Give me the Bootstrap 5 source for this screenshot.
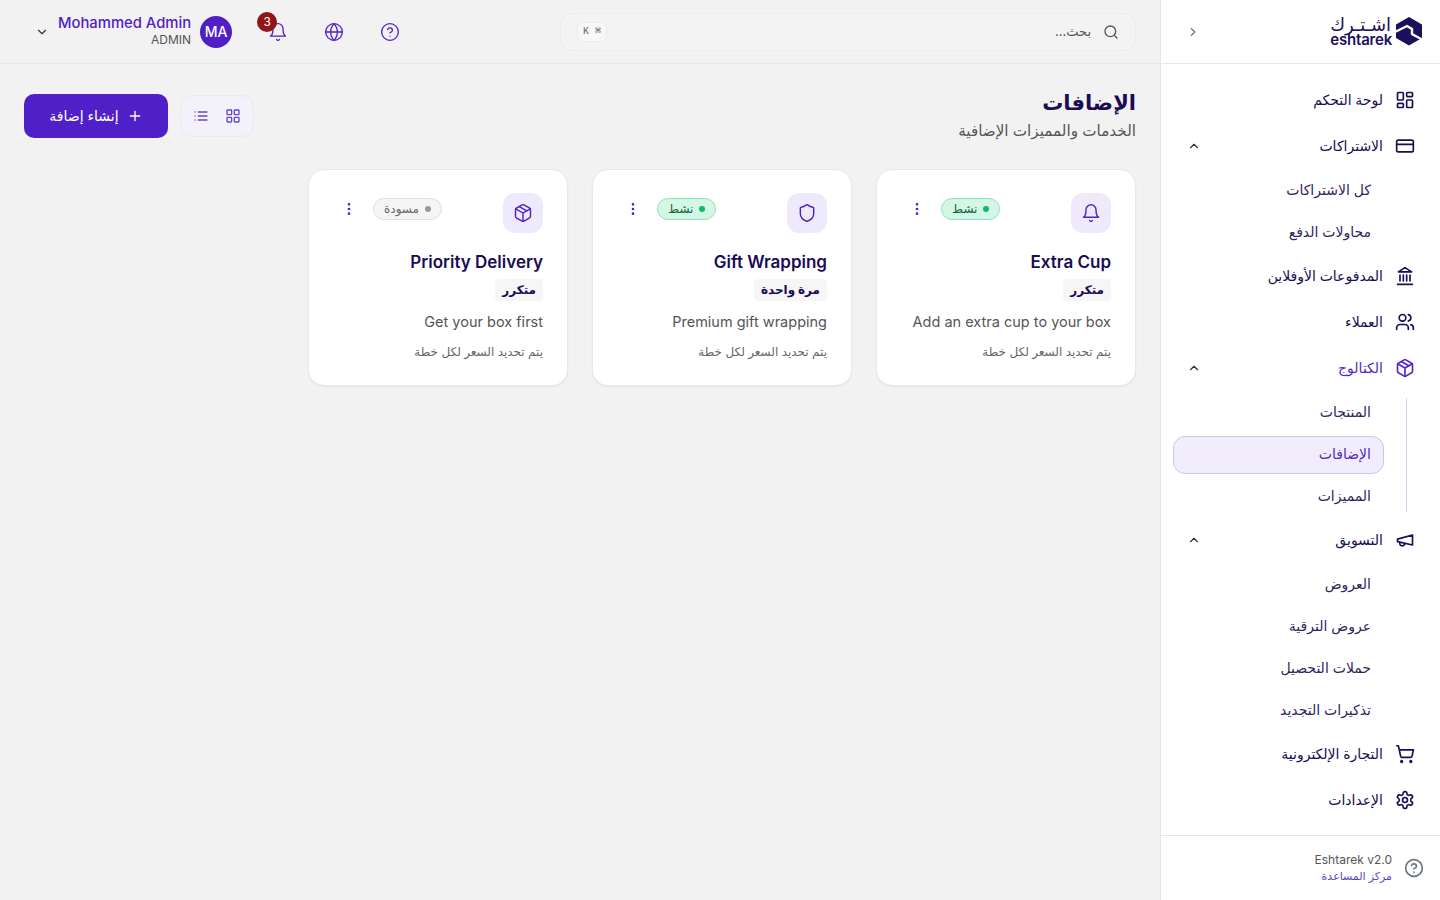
<!DOCTYPE html>
<html lang="ar" dir="rtl">
<head>
    <meta charset="UTF-8">
    <meta name="viewport" content="width=device-width, initial-scale=1.0">
    <title>الإضافات</title>
    <link href="https://cdn.jsdelivr.net/npm/bootstrap@5.3.0/dist/css/bootstrap.min.css" rel="stylesheet">
    <style>
        html, body { height: 100%; }
        body {
            background-color: #f2f2f2;
            font-family: "Inter", "DejaVu Sans", sans-serif;
            color: #1b0c55;
            overflow: hidden;
        }
        svg.ico { fill: none; stroke: currentColor; stroke-width: 2; stroke-linecap: round; stroke-linejoin: round; flex: none; }
        .app-shell { height: 900px; }

        /* sidebar */
        .side-bar { width: 280px; flex: none; background: #fff; border-left: 1px solid #e6e6e6; }
        .side-head { height: 64px; flex: none; border-bottom: 1px solid #e6e6e6; padding: 0 17px 0 25px; }
        .logo-words { text-align: left; color: #1e0f5c; }
        .logo-ar { font-size: 18px; line-height: 17px; }
        .logo-en { font-size: 15px; font-weight: 600; line-height: 14px; letter-spacing: -.2px; }
        .side-nav { padding: 17px 13px 0 12px; }
        .nav-top { height: 38px; margin: 0 12px 8px 0; padding: 0 0 0 14px; font-size: 14px; font-weight: 500; color: #1b0c55; text-decoration: none; gap: 12px; }
        .nav-top .ico { width: 20px; height: 20px; }
        .nav-top span { padding-bottom: 2px; }
        .nav-top .nav-caret { width: 14px; height: 14px; color: #333; margin-right: auto; }
        .nav-top.is-open { margin-bottom: 6px; }
        .nav-top.is-purple { color: #5527c4; }
        .sub-list { position: relative; margin-bottom: 6px; }
        .sub-list.has-line { margin-top: 7px; margin-bottom: 5px; }
        .sub-list.has-line .sub-link { padding-bottom: 4px; }
        .sub-list.has-line::before { content: ""; position: absolute; right: 20px; top: 4px; bottom: 4px; width: 1px; background: #d9d3ee; }
        .sub-wrap { margin-right: 43px; }
        .sub-link { display: flex; align-items: center; height: 38px; margin: 0 0 4px 0; padding: 0 12px 2px; font-size: 14px; color: #31245f; text-decoration: none; border: 1px solid transparent; border-radius: 12px; }
        .sub-link.is-on { background: #f1edfc; border-color: #cfc4ee; color: #5527c4; }
        .side-foot { height: 65px; flex: none; border-top: 1px solid #e6e6e6; margin-top: auto; padding: 0 16px; gap: 12px; }
        .foot-ver { font-size: 12px; color: #555; line-height: 16px; }
        .foot-help { font-size: 11px; color: #5f3fc4; line-height: 16px; }

        /* topbar */
        .top-bar { height: 64px; flex: none; border-bottom: 1px solid #e6e6e6; padding: 0 24px 0 35px; }
        .search-box { width: 576px; height: 38px; flex: none; background: #f3f3f3; border: 1px solid #ebebeb; border-radius: 12px; padding: 0 16px; gap: 12px; color: #555; font-size: 13px; }
        .kbd-hint { font-family: "Liberation Mono", monospace; font-size: 10px; color: #666; background: #f7f7f7; border: 1px solid #ececec; border-radius: 6px; padding: 0 5px; margin-right: auto; height: 20px; line-height: 17px; white-space: nowrap; }
        .top-icons { gap: 36px; margin-right: auto; color: #4f20c8; }
        .top-icons .ico { width: 20px; height: 20px; stroke-width: 1.6; }
        .top-icons .user-caret { width: 14px; height: 14px; stroke-width: 2; color: #333; }
        .bell-wrap { position: relative; display: flex; }
        .bell-count { position: absolute; top: -10px; left: -11px; width: 20px; height: 20px; border-radius: 50%; background: #8f1616; color: #fff; font-size: 12px; display: flex; align-items: center; justify-content: center; }
        .user-box { gap: 9px; }
        .user-avatar { width: 32px; height: 32px; border-radius: 50%; background: #4f20c8; color: #fff; font-size: 14px; font-weight: 500; display: flex; align-items: center; justify-content: center; flex: none; }
        .user-name { font-size: 14.8px; font-weight: 500; color: #4f20c8; line-height: 17px; text-align: right; direction: ltr; }
        .user-role { font-size: 12px; color: #555; line-height: 16px; text-align: right; direction: ltr; }

        /* content */
        .page-main { padding: 25px 24px 24px; }
        .page-title { font-size: 21px; font-weight: 700; color: #1b0c55; line-height: 28px; margin: 0; }
        .page-sub { font-size: 15.2px; color: #555; line-height: 24px; margin: 2px 0 0; }
        .view-toggle { width: 74px; height: 42px; background: #f3f1f9; border: 1px solid #e9e9ee; border-radius: 12px; gap: 16px; color: #6a45cc; }
        .view-toggle .ico { width: 16px; height: 16px; }
        .btn-create { width: 144px; height: 44px; background: #4f20c8; color: #fff; border: 0; border-radius: 10px; font-size: 14px; gap: 8px; }
        .btn-create span { padding-bottom: 2px; }
        .btn-create:hover { background: #4f20c8; color: #fff; }
        .addon-grid { display: grid; grid-template-columns: repeat(4, 1fr); gap: 24px; margin-top: 26px; }
        .addon-card { border: 1px solid #e9e9e9; border-radius: 16px; padding: 23px 24px; height: 217px; box-shadow: 0 1px 2px rgba(0,0,0,.05); }
        .addon-tile { width: 40px; height: 40px; border-radius: 12px; background: #efeafb; color: #4f20c8; display: flex; align-items: center; justify-content: center; }
        .addon-tile .ico { width: 20px; height: 20px; stroke-width: 1.7; }
        .status-pill { height: 22px; border-radius: 11px; border: 1px solid #8fe3bd; background: #d3f6e5; color: #14653f; font-size: 12px; padding: 0 10px 1px; gap: 6px; margin-top: 5px; }
        .status-pill.is-draft { border-color: #e0e0e0; background: #f5f5f5; color: #666; }
        .status-dot { width: 6px; height: 6px; border-radius: 50%; background: #10b76f; }
        .is-draft .status-dot { background: #9a9a9a; }
        .dots-btn { color: #4f20c8; margin: 5px 0 0 8px; height: 22px; }
        .addon-name { font-size: 17px; font-weight: 600; color: #1b0c55; line-height: 24px; margin: 17px 0 0; direction: ltr; text-align: right; }
        .type-tag { display: inline-block; height: 22px; line-height: 21px; background: #f6f6f6; border-radius: 4px; padding: 0 7px; font-size: 12px; font-weight: 700; color: #1b0c55; margin-top: 5px; }
        .addon-desc { font-size: 14.5px; color: #555; line-height: 22px; margin: 10px 0 0; direction: ltr; text-align: right; }
        .addon-note { font-size: 12px; color: #666; line-height: 18px; margin: 10px 0 0; }
    </style>
</head>
<body>
    <svg width="0" height="0" class="position-absolute">
        <symbol id="i-dash" viewBox="0 0 24 24"><rect x="3" y="3" width="7" height="9" rx="1"/><rect x="14" y="3" width="7" height="5" rx="1"/><rect x="14" y="12" width="7" height="9" rx="1"/><rect x="3" y="16" width="7" height="5" rx="1"/></symbol>
        <symbol id="i-card" viewBox="0 0 24 24"><rect x="2" y="5" width="20" height="14" rx="2"/><path d="M2 10h20"/></symbol>
        <symbol id="i-bank" viewBox="0 0 24 24"><path d="M3 22h18M6 18v-7M10 18v-7M14 18v-7M18 18v-7M12 2l8 5H4z"/></symbol>
        <symbol id="i-users" viewBox="0 0 24 24"><path d="M16 21v-2a4 4 0 0 0-4-4H6a4 4 0 0 0-4 4v2"/><circle cx="9" cy="7" r="4"/><path d="M22 21v-2a4 4 0 0 0-3-3.87M16 3.13a4 4 0 0 1 0 7.75"/></symbol>
        <symbol id="i-box" viewBox="0 0 24 24"><path d="M16.5 9.4 7.55 4.24"/><path d="M21 16V8a2 2 0 0 0-1-1.73l-7-4a2 2 0 0 0-2 0l-7 4A2 2 0 0 0 3 8v8a2 2 0 0 0 1 1.73l7 4a2 2 0 0 0 2 0l7-4A2 2 0 0 0 21 16z"/><path d="M3.29 7 12 12l8.71-5M12 22V12"/></symbol>
        <symbol id="i-mega" viewBox="0 0 24 24"><path d="m3 11 18-5v12L3 14v-3z"/><path d="M11.6 16.8a3 3 0 1 1-5.8-1.6"/></symbol>
        <symbol id="i-cart" viewBox="0 0 24 24"><circle cx="8" cy="21" r="1"/><circle cx="19" cy="21" r="1"/><path d="M2.05 2.05h2l2.66 12.42a2 2 0 0 0 2 1.58h9.78a2 2 0 0 0 1.95-1.57l1.65-7.43H5.12"/></symbol>
        <symbol id="i-gear" viewBox="0 0 24 24"><path d="M12.22 2h-.44a2 2 0 0 0-2 2v.18a2 2 0 0 1-1 1.73l-.43.25a2 2 0 0 1-2 0l-.15-.08a2 2 0 0 0-2.73.73l-.22.38a2 2 0 0 0 .73 2.73l.15.1a2 2 0 0 1 1 1.72v.51a2 2 0 0 1-1 1.74l-.15.09a2 2 0 0 0-.73 2.73l.22.38a2 2 0 0 0 2.73.73l.15-.08a2 2 0 0 1 2 0l.43.25a2 2 0 0 1 1 1.73V20a2 2 0 0 0 2 2h.44a2 2 0 0 0 2-2v-.18a2 2 0 0 1 1-1.73l.43-.25a2 2 0 0 1 2 0l.15.08a2 2 0 0 0 2.73-.73l.22-.39a2 2 0 0 0-.73-2.73l-.15-.08a2 2 0 0 1-1-1.74v-.5a2 2 0 0 1 1-1.74l.15-.09a2 2 0 0 0 .73-2.73l-.22-.38a2 2 0 0 0-2.73-.73l-.15.08a2 2 0 0 1-2 0l-.43-.25a2 2 0 0 1-1-1.73V4a2 2 0 0 0-2-2z"/><circle cx="12" cy="12" r="3"/></symbol>
        <symbol id="i-bell" viewBox="0 0 24 24"><path d="M6 8a6 6 0 0 1 12 0c0 7 3 9 3 9H3s3-2 3-9"/><path d="M10.3 21a1.94 1.94 0 0 0 3.4 0"/></symbol>
        <symbol id="i-globe" viewBox="0 0 24 24"><circle cx="12" cy="12" r="10"/><path d="M12 2a14.5 14.5 0 0 0 0 20 14.5 14.5 0 0 0 0-20M2 12h20"/></symbol>
        <symbol id="i-help" viewBox="0 0 24 24"><circle cx="12" cy="12" r="10"/><path d="M9.09 9a3 3 0 0 1 5.83 1c0 2-3 3-3 3M12 17h.01"/></symbol>
        <symbol id="i-search" viewBox="0 0 24 24"><circle cx="11" cy="11" r="8"/><path d="m21 21-4.3-4.3"/></symbol>
        <symbol id="i-shield" viewBox="0 0 24 24"><path d="M20 13c0 5-3.5 7.5-7.66 8.95a1 1 0 0 1-.67-.01C7.5 20.5 4 18 4 13V6a1 1 0 0 1 1-1c2 0 4.5-1.2 6.24-2.72a1.17 1.17 0 0 1 1.52 0C14.51 3.81 17 5 19 5a1 1 0 0 1 1 1z"/></symbol>
        <symbol id="i-plus" viewBox="0 0 24 24"><path d="M5 12h14M12 5v14"/></symbol>
        <symbol id="i-list" viewBox="0 0 24 24"><path d="M8 6h13M8 12h13M8 18h13M3 6h.01M3 12h.01M3 18h.01"/></symbol>
        <symbol id="i-grid" viewBox="0 0 24 24"><rect x="3" y="3" width="7" height="7" rx="1"/><rect x="14" y="3" width="7" height="7" rx="1"/><rect x="14" y="14" width="7" height="7" rx="1"/><rect x="3" y="14" width="7" height="7" rx="1"/></symbol>
        <symbol id="i-up" viewBox="0 0 24 24"><path d="m18 15-6-6-6 6"/></symbol>
        <symbol id="i-down" viewBox="0 0 24 24"><path d="m6 9 6 6 6-6"/></symbol>
        <symbol id="i-right" viewBox="0 0 24 24"><path d="m9 18 6-6-6-6"/></symbol>
        <symbol id="i-dots" viewBox="0 0 24 24"><circle cx="12" cy="5" r="1"/><circle cx="12" cy="12" r="1"/><circle cx="12" cy="19" r="1"/></symbol>
    </svg>

    <div class="app-shell d-flex">
        <!-- Sidebar -->
        <aside class="side-bar d-flex flex-column">
            <div class="side-head d-flex align-items-center justify-content-between">
                <div class="d-flex align-items-center gap-1">
                    <svg width="27" height="29" viewBox="0 0 27 29">
                        <path fill="#1e0f5c" d="M13 0 26 7.5V21L13 28.5 0 21V7.5z"/>
                        <path fill="none" stroke="#fff" stroke-width="2.4" d="M-1 15 11 9l5 3v5l11 6"/>
                    </svg>
                    <div class="logo-words">
                        <div class="logo-ar">اشـتـرك</div>
                        <div class="logo-en">eshtarek</div>
                    </div>
                </div>
                <svg class="ico text-secondary" width="14" height="14"><use href="#i-right"/></svg>
            </div>
            <nav class="side-nav">
                <a class="nav-top d-flex align-items-center" href="#"><svg class="ico"><use href="#i-dash"/></svg><span>لوحة التحكم</span></a>
                <a class="nav-top is-open d-flex align-items-center" href="#"><svg class="ico"><use href="#i-card"/></svg><span>الاشتراكات</span><svg class="ico nav-caret"><use href="#i-up"/></svg></a>
                <div class="sub-list"><div class="sub-wrap">
                    <a class="sub-link" href="#">كل الاشتراكات</a>
                    <a class="sub-link" href="#">محاولات الدفع</a>
                </div></div>
                <a class="nav-top d-flex align-items-center" href="#"><svg class="ico"><use href="#i-bank"/></svg><span>المدفوعات الأوفلاين</span></a>
                <a class="nav-top d-flex align-items-center" href="#"><svg class="ico"><use href="#i-users"/></svg><span>العملاء</span></a>
                <a class="nav-top is-open is-purple d-flex align-items-center" href="#"><svg class="ico"><use href="#i-box"/></svg><span>الكتالوج</span><svg class="ico nav-caret"><use href="#i-up"/></svg></a>
                <div class="sub-list has-line"><div class="sub-wrap">
                    <a class="sub-link" href="#">المنتجات</a>
                    <a class="sub-link is-on" href="#">الإضافات</a>
                    <a class="sub-link" href="#">المميزات</a>
                </div></div>
                <a class="nav-top is-open d-flex align-items-center" href="#"><svg class="ico"><use href="#i-mega"/></svg><span>التسويق</span><svg class="ico nav-caret"><use href="#i-up"/></svg></a>
                <div class="sub-list"><div class="sub-wrap">
                    <a class="sub-link" href="#">العروض</a>
                    <a class="sub-link" href="#">عروض الترقية</a>
                    <a class="sub-link" href="#">حملات التحصيل</a>
                    <a class="sub-link" href="#">تذكيرات التجديد</a>
                </div></div>
                <a class="nav-top d-flex align-items-center" href="#"><svg class="ico"><use href="#i-cart"/></svg><span>التجارة الإلكترونية</span></a>
                <a class="nav-top d-flex align-items-center" href="#"><svg class="ico"><use href="#i-gear"/></svg><span>الإعدادات</span></a>
            </nav>
            <div class="side-foot d-flex align-items-center">
                <svg class="ico text-secondary" width="20" height="20"><use href="#i-help"/></svg>
                <div>
                    <div class="foot-ver" dir="ltr">Eshtarek v2.0</div>
                    <div class="foot-help">مركز المساعدة</div>
                </div>
            </div>
        </aside>

        <div class="flex-grow-1 d-flex flex-column min-w-0">
            <!-- Topbar -->
            <header class="top-bar d-flex align-items-center">
                <div class="search-box d-flex align-items-center">
                    <svg class="ico" width="16" height="16"><use href="#i-search"/></svg>
                    <span>بحث...</span>
                    <span class="kbd-hint">⌘ K</span>
                </div>
                <div class="top-icons d-flex align-items-center">
                    <svg class="ico"><use href="#i-help"/></svg>
                    <svg class="ico"><use href="#i-globe"/></svg>
                    <span class="bell-wrap"><svg class="ico"><use href="#i-bell"/></svg><span class="bell-count">3</span></span>
                    <div class="user-box d-flex align-items-center">
                        <span class="user-avatar" dir="ltr">MA</span>
                        <div>
                            <div class="user-name">Mohammed Admin</div>
                            <div class="user-role">ADMIN</div>
                        </div>
                        <svg class="ico user-caret"><use href="#i-down"/></svg>
                    </div>
                </div>
            </header>

            <!-- Page -->
            <main class="page-main flex-grow-1">
                <div class="d-flex align-items-center justify-content-between">
                    <div>
                        <h1 class="page-title">الإضافات</h1>
                        <p class="page-sub">الخدمات والمميزات الإضافية</p>
                    </div>
                    <div class="d-flex align-items-center gap-2">
                        <div class="view-toggle d-flex align-items-center justify-content-center">
                            <svg class="ico"><use href="#i-grid"/></svg>
                            <svg class="ico"><use href="#i-list"/></svg>
                        </div>
                        <button class="btn btn-create d-flex align-items-center justify-content-center me-1">
                            <svg class="ico" width="16" height="16"><use href="#i-plus"/></svg>
                            <span>إنشاء إضافة</span>
                        </button>
                    </div>
                </div>

                <div class="addon-grid">
                    <div class="card addon-card">
                        <div class="d-flex justify-content-between align-items-start">
                            <div class="addon-tile"><svg class="ico"><use href="#i-bell"/></svg></div>
                            <div class="d-flex align-items-start gap-3">
                                <span class="status-pill d-inline-flex align-items-center"><i class="status-dot"></i>نشط</span>
                                <svg class="ico dots-btn" width="16" height="16"><use href="#i-dots"/></svg>
                            </div>
                        </div>
                        <h3 class="addon-name">Extra Cup</h3>
                        <div><span class="type-tag">متكرر</span></div>
                        <p class="addon-desc">Add an extra cup to your box</p>
                        <p class="addon-note">يتم تحديد السعر لكل خطة</p>
                    </div>
                    <div class="card addon-card">
                        <div class="d-flex justify-content-between align-items-start">
                            <div class="addon-tile"><svg class="ico"><use href="#i-shield"/></svg></div>
                            <div class="d-flex align-items-start gap-3">
                                <span class="status-pill d-inline-flex align-items-center"><i class="status-dot"></i>نشط</span>
                                <svg class="ico dots-btn" width="16" height="16"><use href="#i-dots"/></svg>
                            </div>
                        </div>
                        <h3 class="addon-name">Gift Wrapping</h3>
                        <div><span class="type-tag">مرة واحدة</span></div>
                        <p class="addon-desc">Premium gift wrapping</p>
                        <p class="addon-note">يتم تحديد السعر لكل خطة</p>
                    </div>
                    <div class="card addon-card">
                        <div class="d-flex justify-content-between align-items-start">
                            <div class="addon-tile"><svg class="ico"><use href="#i-box"/></svg></div>
                            <div class="d-flex align-items-start gap-3">
                                <span class="status-pill is-draft d-inline-flex align-items-center"><i class="status-dot"></i>مسودة</span>
                                <svg class="ico dots-btn" width="16" height="16"><use href="#i-dots"/></svg>
                            </div>
                        </div>
                        <h3 class="addon-name">Priority Delivery</h3>
                        <div><span class="type-tag">متكرر</span></div>
                        <p class="addon-desc">Get your box first</p>
                        <p class="addon-note">يتم تحديد السعر لكل خطة</p>
                    </div>
                </div>
            </main>
        </div>
    </div>
</body>
</html>
